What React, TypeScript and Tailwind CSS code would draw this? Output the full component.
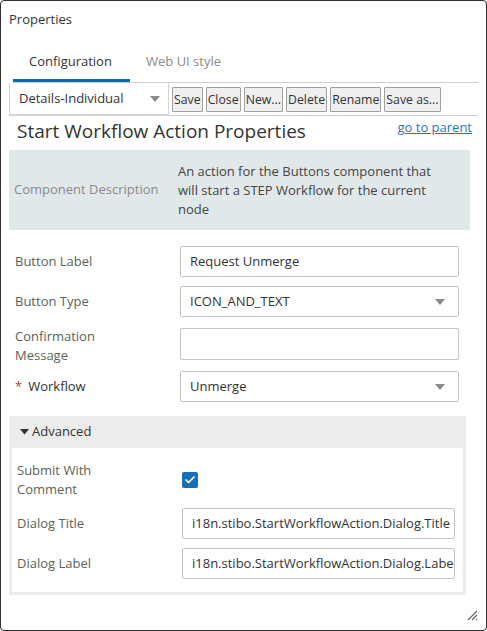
import { Check } from "lucide-react";

const font = { fontFamily: '"Open Sans", "Noto Sans", sans-serif' };

function Caret() {
  return (
    <svg width="10" height="6" viewBox="0 0 10 6" className="shrink-0">
      <path d="M0 0 L10 0 L5 6 Z" fill="#8a8a8a" />
    </svg>
  );
}

function TextInput({ value, width = "w-[279px]" }: { value?: string; width?: string }) {
  return (
    <div
      className={`${width} h-[31px] shrink-0 overflow-hidden whitespace-nowrap rounded-[2px] border border-[#c4c4c4] bg-white pl-[9px] text-[13px] leading-[29px] text-[#333]`}
    >
      {value}
    </div>
  );
}

function Select({ value }: { value: string }) {
  return (
    <div className="flex h-[31px] w-[279px] shrink-0 items-center justify-between rounded-[2px] border border-[#c4c4c4] bg-white pl-[9px] pr-[13px] text-[13px] text-[#333]">
      <span>{value}</span>
      <Caret />
    </div>
  );
}

function ToolButton({ label }: { label: string }) {
  return (
    <button className="h-[25px] rounded-[1px] border border-[#a0a0a0] bg-[#efefef] px-[1px] text-[12.3px] leading-[22px] text-[#333]">
      {label}
    </button>
  );
}

export default function App() {
  return (
    <div
      style={font}
      className="relative flex h-[631px] w-[487px] flex-col overflow-hidden rounded-[4px] border border-[#2e2e2e] bg-white"
    >
      <div className="px-[8px] pt-[9px] text-[13px] leading-[18px] text-[#333]">Properties</div>

      {/* tabs */}
      <div className="ml-[12px] mr-[8px] mt-[24px] flex border-b border-[#cfcfcf]">
        <div className="w-[117px] border-b-[3px] border-[#0e6bb0] pb-[9px] pl-[16px] text-[13px] leading-[18px] text-[#333]">
          Configuration
        </div>
        <div className="pl-[16px] text-[13px] leading-[18px] text-[#8a8a8a]">Web UI style</div>
      </div>

      {/* toolbar */}
      <div className="ml-[8px] mr-[8px] flex items-start gap-[3px] border-b border-[#cfcfcf]">
        <div className="flex h-[32px] w-[160px] items-center justify-between border border-t-0 border-[#d4d4d4] pl-[9px] pr-[8px] text-[13px] text-[#333]">
          <span>Details-Individual</span>
          <Caret />
        </div>
        <div className="mt-[4px] flex gap-[3px]">
          {["Save", "Close", "New...", "Delete", "Rename", "Save as..."].map((b) => (
            <ToolButton key={b} label={b} />
          ))}
        </div>
      </div>

      {/* heading */}
      <div className="ml-[16px] mr-[14px] flex items-start justify-between">
        <h1 className="text-[19px] leading-[30px] text-[#333]">Start Workflow Action Properties</h1>
        <a className="mt-[2px] text-[13px] leading-[18px] text-[#1a7ac8] underline">go to parent</a>
      </div>

      {/* description */}
      <div className="ml-[8px] mr-[16px] mt-[4px] flex h-[80px] items-center bg-[#e0e8ea]">
        <div className="w-[169px] pl-[5px] text-[13px] text-[#8a8a8a]">Component Description</div>
        <div className="w-[266px] text-[13px] leading-[19px] text-[#444]">
          An action for the Buttons component that will start a STEP Workflow for the current node
        </div>
      </div>

      {/* form */}
      <div className="ml-[14px] mt-[16px] flex flex-col">
        <Row label="Button Label">
          <TextInput value="Request Unmerge" />
        </Row>
        <div className="mt-[9px]">
          <Row label="Button Type">
            <Select value="ICON_AND_TEXT" />
          </Row>
        </div>
        <div className="mt-[11px] flex h-[32px] items-start">
          <div className="-mt-[1px] w-[165px] text-[13px] leading-[19px] text-[#5c6358]">
            Confirmation
            <br />
            Message
          </div>
          <div className="h-[32px] w-[279px] rounded-[2px] border border-[#c4c4c4]" />
        </div>
        <div className="mt-[11px]">
          <Row
            label={
              <>
                <span className="mr-[6px] text-[#c0392b]">*</span>
                <span className="text-[#333]">Workflow</span>
              </>
            }
          >
            <Select value="Unmerge" />
          </Row>
        </div>
      </div>

      {/* advanced */}
      <div className="ml-[8px] mt-[14px] w-[457px] bg-[#ececec] px-[3px] pb-[3px]">
        <div className="flex h-[32px] items-center pl-[8px] text-[13px] text-[#333]">
          <svg width="9" height="6" viewBox="0 0 9 6" className="mr-[3px]">
            <path d="M0 0 L9 0 L4.5 5.5 Z" fill="#333" />
          </svg>
          Advanced
        </div>
        <div className="flex flex-col bg-white pb-[13px] pl-[5px] pt-[13px]">
          <div className="flex items-center">
            <div className="w-[165px] text-[13px] leading-[19px] text-[#5c6358]">
              Submit With
              <br />
              Comment
            </div>
            <div className="flex h-[16px] w-[16px] items-center justify-center rounded-[2px] bg-[#1570b8]">
              <Check size={12} strokeWidth={3.5} color="white" />
            </div>
          </div>
          <div className="mt-[9px] flex items-center">
            <div className="w-[165px] text-[13px] text-[#5c6358]">Dialog Title</div>
            <TextInput value="i18n.stibo.StartWorkflowAction.Dialog.Title" width="w-[273px]" />
          </div>
          <div className="mt-[9px] flex items-center">
            <div className="w-[165px] text-[13px] text-[#5c6358]">Dialog Label</div>
            <TextInput value="i18n.stibo.StartWorkflowAction.Dialog.Label" width="w-[273px]" />
          </div>
        </div>
      </div>

      {/* resize grip */}
      <svg width="12" height="12" viewBox="0 0 12 12" className="absolute bottom-[9px] right-[8px]">
        <path d="M11 2 L2 11 M11 6 L6 11 M11 10 L10 11" stroke="#666" strokeWidth="1.2" />
      </svg>
    </div>
  );
}

function Row({ label, children }: { label: React.ReactNode; children: React.ReactNode }) {
  return (
    <div className="flex items-center">
      <div className="w-[165px] text-[13px] text-[#5c6358]">{label}</div>
      {children}
    </div>
  );
}
